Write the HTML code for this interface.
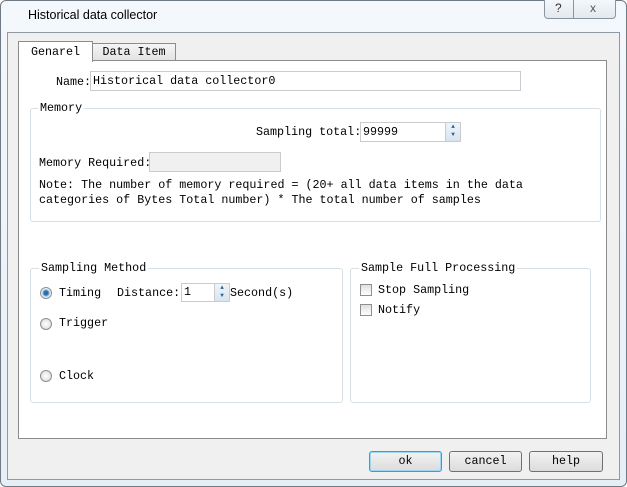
<!DOCTYPE html>
<html><head><style>
*{box-sizing:border-box;margin:0;padding:0}
body{width:627px;height:487px;background:#fff;font-family:"Liberation Mono","Noto Sans CJK SC",monospace;font-size:11.7px;color:#000;position:relative;overflow:hidden}
.abs{position:absolute}
.win{left:0;top:0;width:627px;height:487px;border:1px solid #6f7a85;border-radius:6px;background:linear-gradient(#f4f8fc,#e6eef6)}
.client{left:7px;top:32px;width:613px;height:448px;background:#f0f0f0;border:1px solid #8e99a4}
.page{left:18px;top:60px;width:589px;height:379px;background:#fff;border:1px solid #8c8c8c}
.tab{border:1px solid #8c8c8c;border-bottom:none;background:#fff;padding:3px 0 0 0;text-align:center}
.inp{border:1px solid #c8ccd0;background:#fff;height:20px;padding:2px 2px}
.grp{border:1px solid #d5dfe5;border-radius:3px}
.lg{background:#fff;padding:0 2px;line-height:14px}
.btn{border:1px solid #707070;border-radius:3px;background:linear-gradient(#f2f2f2,#dcdcdc);height:21px;text-align:center;line-height:19px}
.radio{width:12px;height:12px;border-radius:50%;border:1px solid #8e8f8f;background:radial-gradient(#fff,#d6d6d6)}
.chk{width:12px;height:12px;border:1px solid #8e8f8f;background:linear-gradient(#e0e0e0,#fff)}
.spin{width:15px;border-left:1px solid #c8ccd0;background:linear-gradient(#eef4fa,#d8e4ef);font-size:6px;line-height:8px;text-align:center;color:#2a5f9a}
</style></head><body>
<div class="abs win"></div>
<div class="abs" style="left:28px;top:8px;font-family:'Liberation Sans',sans-serif;font-size:12.5px;color:#000">Historical data collector</div>
<div class="abs" style="left:544px;top:0;width:72px;height:19px;border:1px solid #8a949e;border-top:none;border-radius:0 0 4px 4px;background:linear-gradient(#f4f7fa,#e3e9ef)"></div>
<div class="abs" style="left:573px;top:0;width:1px;height:19px;background:#8a949e"></div>
<div class="abs" style="left:555px;top:1px;font-family:'Liberation Sans',sans-serif;font-size:12px;color:#333">?</div>
<div class="abs" style="left:590px;top:1px;font-family:'Liberation Sans',sans-serif;font-size:12px;color:#555">x</div>
<div class="abs client"></div>
<div class="abs page"></div>
<div class="abs tab" style="left:18px;top:41px;width:75px;height:21px">Genarel</div>
<div class="abs tab" style="left:92px;top:43px;width:84px;height:17px;background:linear-gradient(#f5f5f5,#e3e3e3);padding-top:1px">Data Item</div>

<div class="abs" style="left:56px;top:75px">Name:</div>
<div class="abs inp" style="left:90px;top:71px;width:431px">Historical data collector0</div>

<div class="abs grp" style="left:30px;top:108px;width:571px;height:114px"></div>
<div class="abs lg" style="left:38px;top:101px">Memory</div>
<div class="abs" style="left:256px;top:125px">Sampling total:</div>
<div class="abs inp" style="left:360px;top:122px;width:101px;height:20px">99999</div>
<div class="abs spin" style="left:445px;top:123px;height:18px">▲<br>▼</div>
<div class="abs" style="left:39px;top:156px">Memory Required:</div>
<div class="abs inp" style="left:149px;top:152px;width:132px;height:20px;background:#f0f0f0"></div>
<div class="abs" style="left:39px;top:178px;line-height:15px">Note: The number of memory required = (20+ all data items in the data<br>categories of Bytes Total number) * The total number of samples</div>

<div class="abs grp" style="left:30px;top:268px;width:313px;height:135px"></div>
<div class="abs lg" style="left:39px;top:261px">Sampling Method</div>
<div class="abs radio" style="left:40px;top:287px;background:radial-gradient(#2a6fb0 30%,#9cc3e6 45%,#fff 70%)"></div>
<div class="abs" style="left:59px;top:286px">Timing</div>
<div class="abs" style="left:117px;top:286px">Distance:</div>
<div class="abs inp" style="left:181px;top:283px;width:49px;height:19px;padding-top:1px">1</div>
<div class="abs spin" style="left:214px;top:284px;height:17px">▲<br>▼</div>
<div class="abs" style="left:230px;top:286px">Second(s)</div>
<div class="abs radio" style="left:40px;top:318px"></div>
<div class="abs" style="left:59px;top:316px">Trigger</div>
<div class="abs radio" style="left:40px;top:370px"></div>
<div class="abs" style="left:59px;top:369px">Clock</div>

<div class="abs grp" style="left:350px;top:268px;width:241px;height:135px"></div>
<div class="abs lg" style="left:359px;top:261px">Sample Full Processing</div>
<div class="abs chk" style="left:360px;top:284px"></div>
<div class="abs" style="left:378px;top:283px">Stop Sampling</div>
<div class="abs chk" style="left:360px;top:304px"></div>
<div class="abs" style="left:378px;top:303px">Notify</div>

<div class="abs btn" style="left:369px;top:451px;width:73px;border-color:#3c9ad6;box-shadow:inset 0 0 0 1px #9fd6f3">ok</div>
<div class="abs btn" style="left:449px;top:451px;width:73px">cancel</div>
<div class="abs btn" style="left:529px;top:451px;width:74px">help</div>
</body></html>
